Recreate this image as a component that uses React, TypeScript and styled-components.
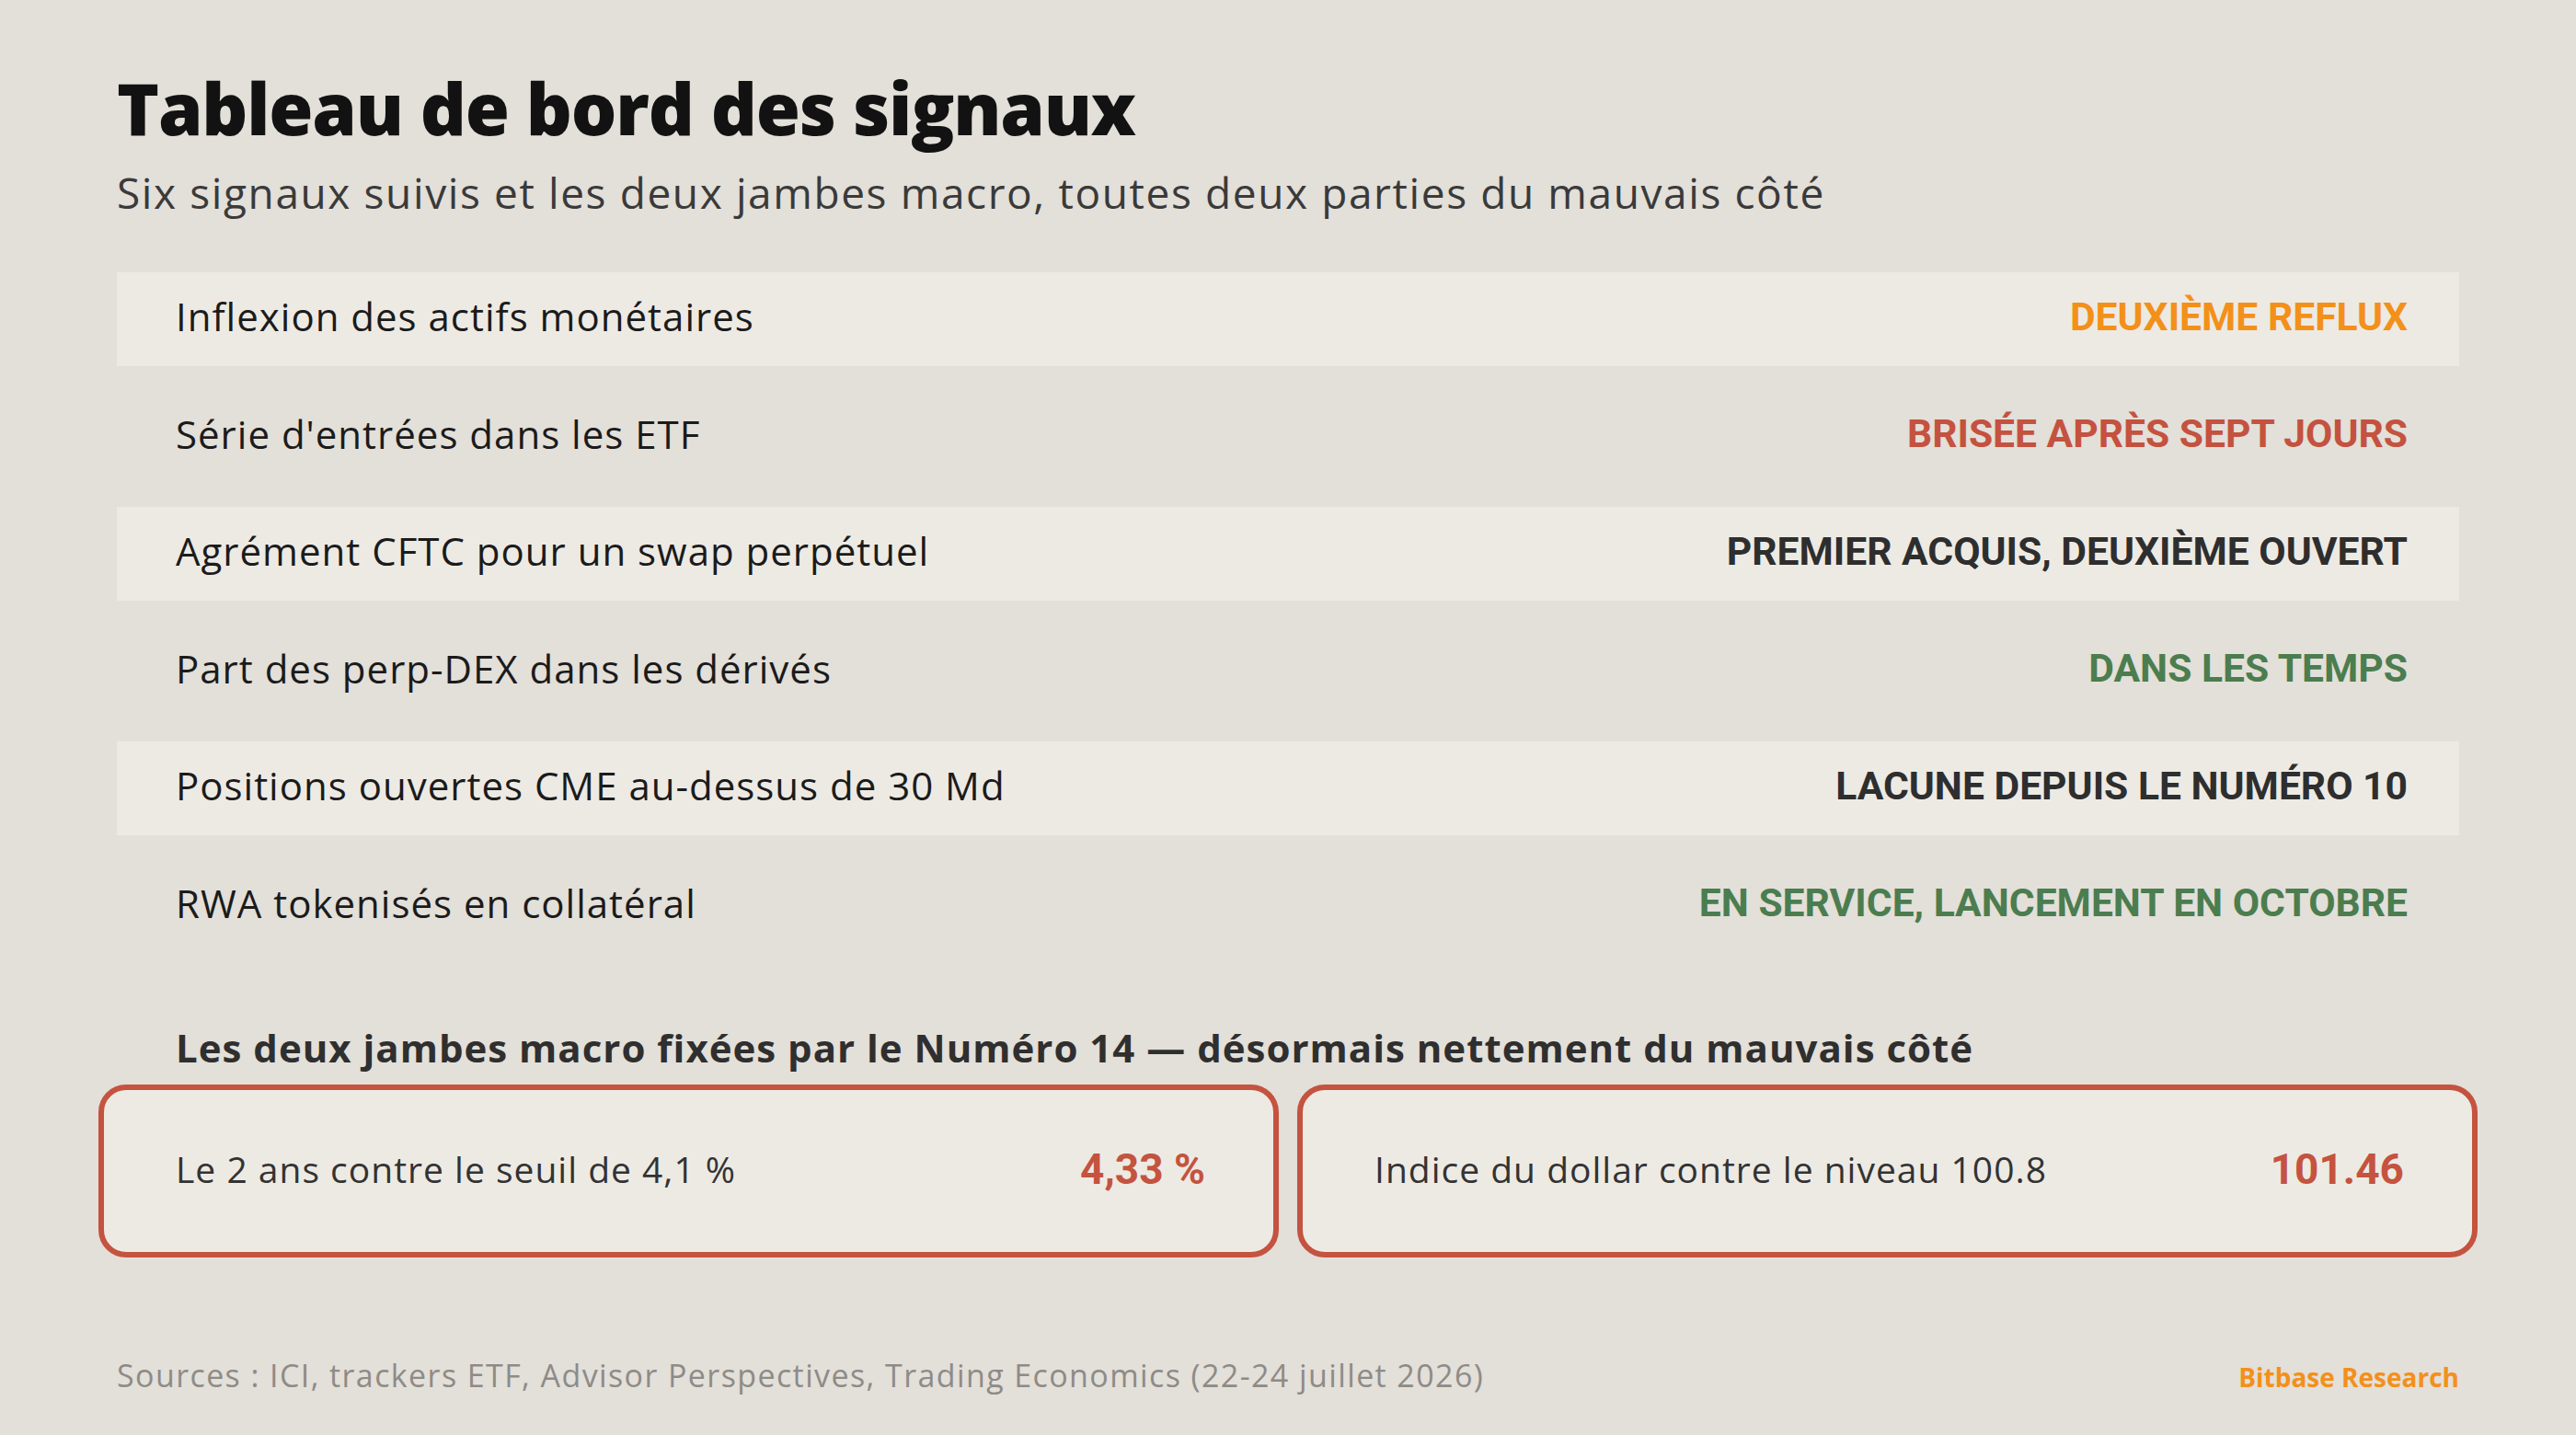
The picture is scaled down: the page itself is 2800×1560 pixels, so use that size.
import React from "react";
import styled, { createGlobalStyle } from "styled-components";

const Global = createGlobalStyle`
  html, body { margin: 0; padding: 0; background: #E3DFD9; }
  body { font-family: "Open Sans", "Liberation Sans", sans-serif; }
`;

const Page = styled.div`
  box-sizing: border-box;
  width: 2800px;
  height: 1560px;
  padding: 69px 127px 42px;
  display: flex;
  flex-direction: column;
  background: #E3DFD9;
`;

const Title = styled.h1`
  margin: 0;
  font-family: "Open Sans", sans-serif;
  font-weight: 800;
  font-size: 78px;
  line-height: 96px;
  letter-spacing: -1.2px;
  color: #121212;
`;

const Subtitle = styled.p`
  margin: 12px 0 0;
  font-family: "Open Sans", sans-serif;
  font-weight: 400;
  font-size: 46px;
  line-height: 64px;
  letter-spacing: 1.6px;
  color: #3a3a3a;
`;

const Table = styled.div`
  margin-top: 55px;
  display: flex;
  flex-direction: column;
  gap: 25.5px;
`;

const Row = styled.div<{ $alt: boolean }>`
  box-sizing: border-box;
  height: 102px;
  padding: 0 56px 7px 64px;
  display: flex;
  align-items: center;
  justify-content: space-between;
  background: ${(p) => (p.$alt ? "#EDEAE4" : "transparent")};
`;

const Label = styled.span`
  font-family: "Open Sans", sans-serif;
  font-size: 42px;
  letter-spacing: 1px;
  color: #1b1b1b;
`;

const toneColors: Record<string, string> = {
  orange: "#F3901A",
  red: "#C4523F",
  dark: "#2E2E2E",
  green: "#4B7D4F",
};

const Status = styled.span<{ $tone: string }>`
  font-family: "Roboto", sans-serif;
  font-weight: 700;
  font-size: 42.6px;
  color: ${(p) => toneColors[p.$tone]};
`;

const MacroHeading = styled.h2`
  margin: 75px 0 0 64px;
  font-family: "Open Sans", sans-serif;
  font-weight: 700;
  font-size: 42px;
  line-height: 56px;
  letter-spacing: 1px;
  color: #2f2f2f;
`;

const Cards = styled.div`
  margin: 12px -20px 0;
  display: grid;
  grid-template-columns: 1fr 1fr;
  gap: 20px;
`;

const Card = styled.div`
  box-sizing: border-box;
  height: 188px;
  padding: 0 74px 4px 78px;
  border: 6px solid #C4533F;
  border-radius: 30px;
  background: #EDEAE4;
  display: flex;
  align-items: center;
  justify-content: space-between;
`;

const CardLabel = styled.span`
  font-family: "Open Sans", sans-serif;
  font-size: 39px;
  letter-spacing: 1px;
  color: #333;
`;

const CardValue = styled.span`
  font-family: "Roboto", sans-serif;
  font-weight: 700;
  font-size: 46px;
  color: #C4533F;
`;

const Footer = styled.div`
  margin-top: auto;
  display: flex;
  align-items: baseline;
  justify-content: space-between;
`;

const Sources = styled.span`
  font-family: "Open Sans", sans-serif;
  font-size: 34px;
  letter-spacing: 1.4px;
  color: #8E8B87;
`;

const Brand = styled.span`
  font-family: "Open Sans", sans-serif;
  font-weight: 700;
  font-size: 28px;
  color: #F3901A;
`;

const rows = [
  { label: "Inflexion des actifs monétaires", status: "DEUXIÈME REFLUX", tone: "orange" },
  { label: "Série d'entrées dans les ETF", status: "BRISÉE APRÈS SEPT JOURS", tone: "red" },
  { label: "Agrément CFTC pour un swap perpétuel", status: "PREMIER ACQUIS, DEUXIÈME OUVERT", tone: "dark" },
  { label: "Part des perp-DEX dans les dérivés", status: "DANS LES TEMPS", tone: "green" },
  { label: "Positions ouvertes CME au-dessus de 30 Md", status: "LACUNE DEPUIS LE NUMÉRO 10", tone: "dark" },
  { label: "RWA tokenisés en collatéral", status: "EN SERVICE, LANCEMENT EN OCTOBRE", tone: "green" },
];

const cards = [
  { label: "Le 2 ans contre le seuil de 4,1 %", value: "4,33 %" },
  { label: "Indice du dollar contre le niveau 100.8", value: "101.46" },
];

export default function App() {
  return (
    <>
      <Global />
      <Page>
        <Title>Tableau de bord des signaux</Title>
        <Subtitle>Six signaux suivis et les deux jambes macro, toutes deux parties du mauvais côté</Subtitle>
        <Table>
          {rows.map((r, i) => (
            <Row key={r.label} $alt={i % 2 === 0}>
              <Label>{r.label}</Label>
              <Status $tone={r.tone}>{r.status}</Status>
            </Row>
          ))}
        </Table>
        <MacroHeading>Les deux jambes macro fixées par le Numéro 14 — désormais nettement du mauvais côté</MacroHeading>
        <Cards>
          {cards.map((c) => (
            <Card key={c.label}>
              <CardLabel>{c.label}</CardLabel>
              <CardValue>{c.value}</CardValue>
            </Card>
          ))}
        </Cards>
        <Footer>
          <Sources>Sources : ICI, trackers ETF, Advisor Perspectives, Trading Economics (22-24 juillet 2026)</Sources>
          <Brand>Bitbase Research</Brand>
        </Footer>
      </Page>
    </>
  );
}
